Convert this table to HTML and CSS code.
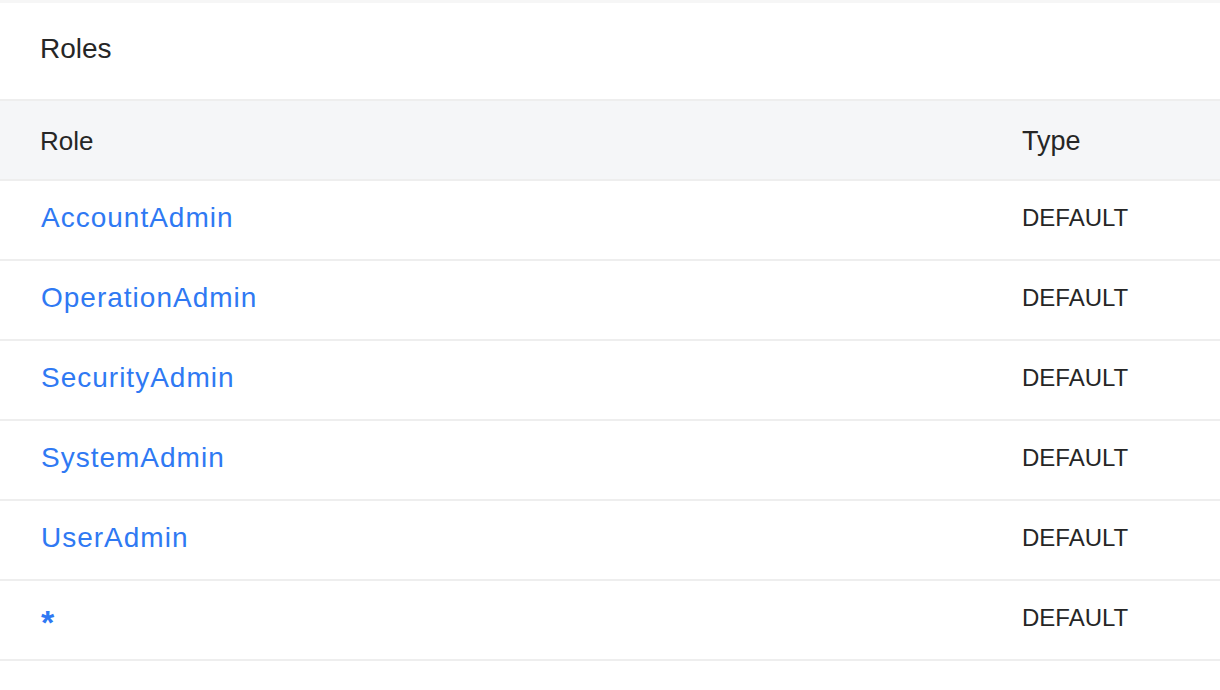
FILE: index.html
```html
<!DOCTYPE html>
<html>
<head>
<meta charset="utf-8">
<link rel="stylesheet" href="styles.css">
</head>
<body>
<div class="panel">
  <div class="panel-title">Roles</div>
  <div class="table">
    <div class="row head">
      <div class="col-role">Role</div>
      <div class="col-type">Type</div>
    </div>
    <div class="row">
      <div class="col-role"><a class="link">AccountAdmin</a></div>
      <div class="col-type type-val">DEFAULT</div>
    </div>
    <div class="row">
      <div class="col-role"><a class="link">OperationAdmin</a></div>
      <div class="col-type type-val">DEFAULT</div>
    </div>
    <div class="row">
      <div class="col-role"><a class="link">SecurityAdmin</a></div>
      <div class="col-type type-val">DEFAULT</div>
    </div>
    <div class="row">
      <div class="col-role"><a class="link">SystemAdmin</a></div>
      <div class="col-type type-val">DEFAULT</div>
    </div>
    <div class="row">
      <div class="col-role"><a class="link">UserAdmin</a></div>
      <div class="col-type type-val">DEFAULT</div>
    </div>
    <div class="row">
      <div class="col-role"><a class="link star">*</a></div>
      <div class="col-type type-val">DEFAULT</div>
    </div>
  </div>
</div>
</body>
</html>
```

FILE: styles.css
```css
html, body {
  margin: 0;
  padding: 0;
  background: #ffffff;
}
body {
  font-family: "Liberation Sans", Arial, sans-serif;
  color: #262626;
}
.panel {
  border-top: 3px solid #f6f6f6;
}
.panel-title {
  height: 98px;
  box-sizing: border-box;
  padding-bottom: 4px;
  display: flex;
  align-items: center;
  padding-left: 40px;
  font-size: 28px;
  border-bottom: 2px solid #eeeeee;
}
.table {
  display: flex;
  flex-direction: column;
}
.row {
  display: flex;
  align-items: center;
  height: 78px;
  box-sizing: content-box;
  border-bottom: 2px solid #eeeeee;
}
.row:not(.head) {
  height: 74px;
  padding-bottom: 4px;
}
.row.head {
  background: #f5f6f8;
  font-size: 26px;
  height: 76px;
  padding-top: 2px;
}
.col-role {
  flex: 1;
  padding-left: 40px;
}
.col-type {
  width: 198px;
}
.head .col-type {
  font-size: 27px;
}
.link {
  color: #2f79f3;
  font-size: 28px;
  letter-spacing: 1px;
  margin-left: 1px;
  cursor: pointer;
}
.link.star {
  font-size: 34px;
  font-weight: bold;
  position: relative;
  top: 4px;
}
.type-val {
  font-size: 24px;
}
```
